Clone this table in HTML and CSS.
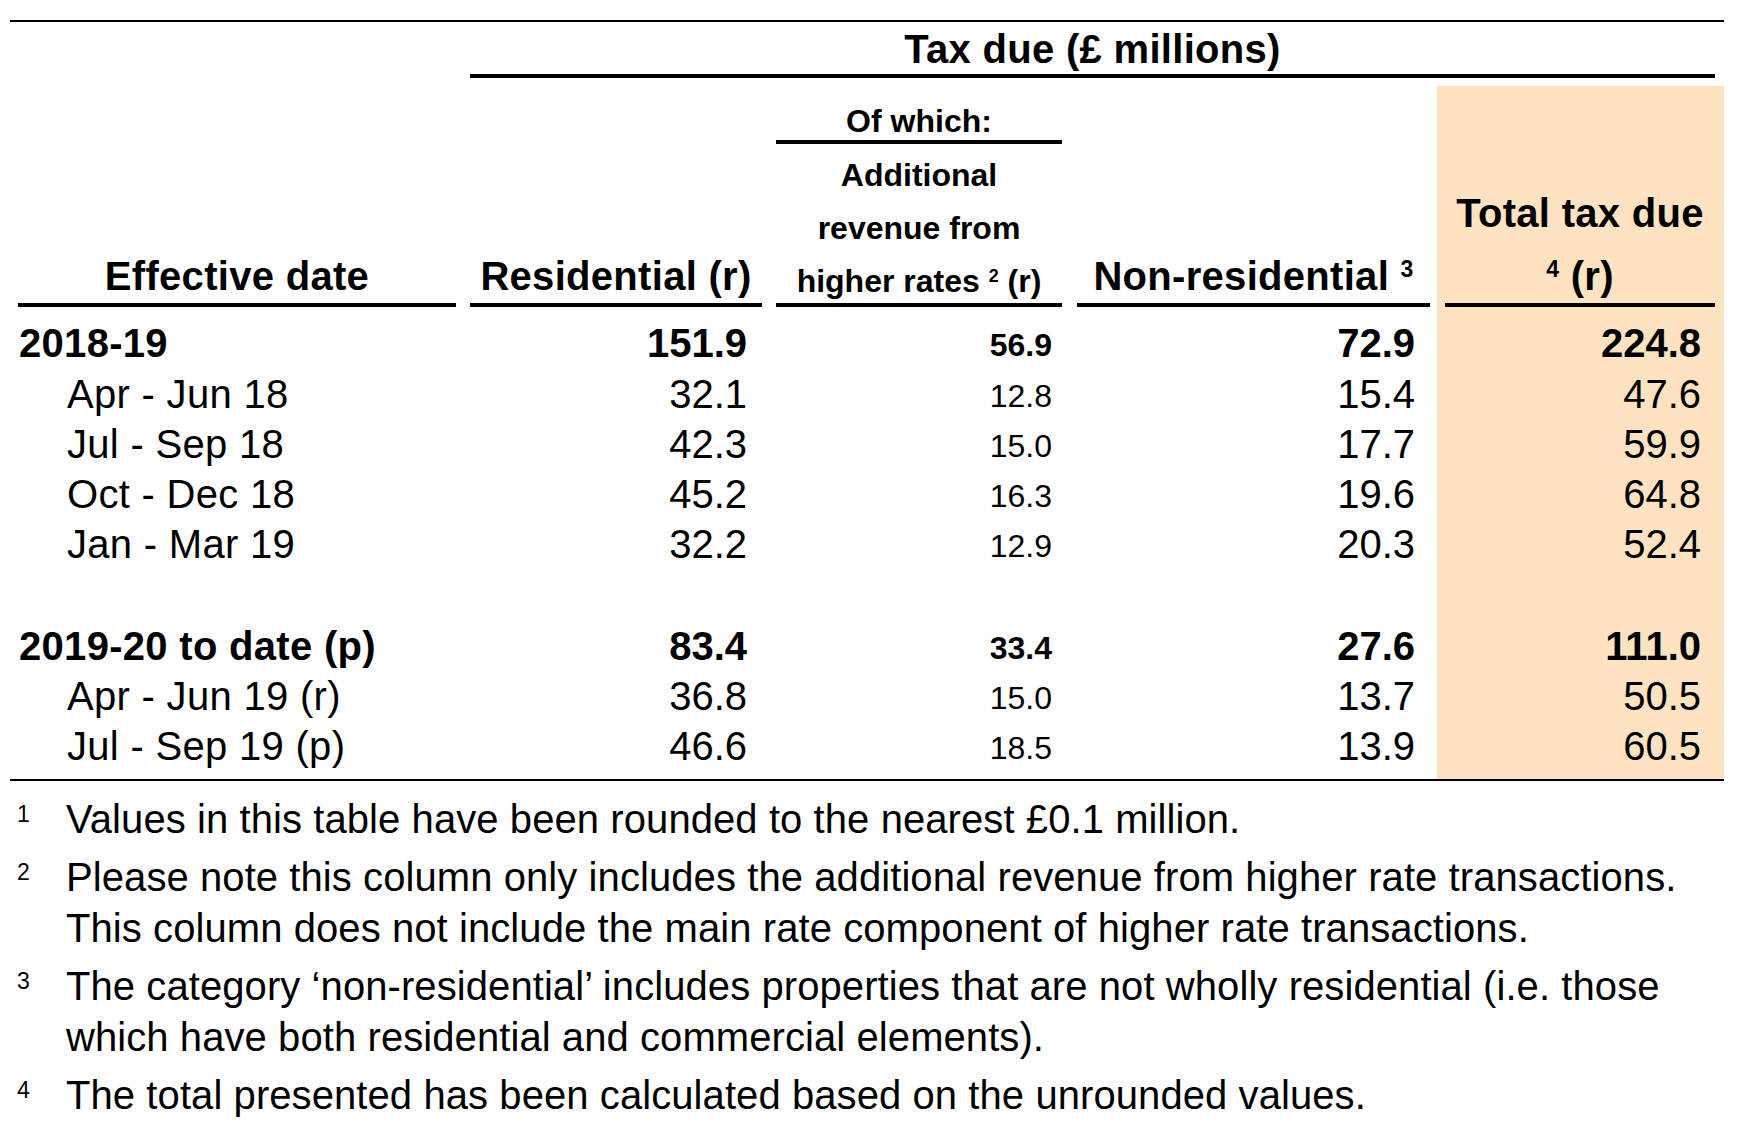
FILE: index.html
```html
<!DOCTYPE html>
<html lang="en">
<head>
<meta charset="utf-8">
<title>Tax due (£ millions)</title>
<link rel="stylesheet" href="styles.css">
</head>
<body>
<div class="page">
  <div class="tbl">
    <div class="cell blank"></div>
    <div class="cell title"><div class="title-in">Tax due (£ millions)</div></div>

    <div class="cell head c1"><div class="hu m1"><div class="hline">Effective date</div></div></div>
    <div class="cell head c2"><div class="hu m2"><div class="hline">Residential (r)</div></div></div>
    <div class="cell head c3">
      <div class="ofwhich m3">Of which:</div>
      <div class="hu m3 small-head">
        <div class="sline">Additional</div>
        <div class="sline">revenue from</div>
        <div class="sline">higher rates <span class="sup-s">2</span> (r)</div>
      </div>
    </div>
    <div class="cell head c4"><div class="hu m4"><div class="hline">Non-residential <span class="sup-l">3</span></div></div></div>
    <div class="cell head c5 hl"><div class="hu m5"><div class="hline first">Total tax due</div><div class="hline"><span class="sup-l">4</span> (r)</div></div></div>

    <div class="cell lab bold r1">2018-19</div>
    <div class="cell num bold r1">151.9</div>
    <div class="cell snum bold r1">56.9</div>
    <div class="cell num bold r1">72.9</div>
    <div class="cell tnum bold hl r1">224.8</div>

    <div class="cell lab sub">Apr - Jun 18</div>
    <div class="cell num">32.1</div>
    <div class="cell snum">12.8</div>
    <div class="cell num">15.4</div>
    <div class="cell tnum hl">47.6</div>

    <div class="cell lab sub">Jul - Sep 18</div>
    <div class="cell num">42.3</div>
    <div class="cell snum">15.0</div>
    <div class="cell num">17.7</div>
    <div class="cell tnum hl">59.9</div>

    <div class="cell lab sub">Oct - Dec 18</div>
    <div class="cell num">45.2</div>
    <div class="cell snum">16.3</div>
    <div class="cell num">19.6</div>
    <div class="cell tnum hl">64.8</div>

    <div class="cell lab sub">Jan - Mar 19</div>
    <div class="cell num">32.2</div>
    <div class="cell snum">12.9</div>
    <div class="cell num">20.3</div>
    <div class="cell tnum hl">52.4</div>

    <div class="cell gap"></div>
    <div class="cell gap"></div>
    <div class="cell gap"></div>
    <div class="cell gap"></div>
    <div class="cell gap hl"></div>

    <div class="cell lab bold">2019-20 to date (p)</div>
    <div class="cell num bold">83.4</div>
    <div class="cell snum bold">33.4</div>
    <div class="cell num bold">27.6</div>
    <div class="cell tnum bold hl">111.0</div>

    <div class="cell lab sub">Apr - Jun 19 (r)</div>
    <div class="cell num">36.8</div>
    <div class="cell snum">15.0</div>
    <div class="cell num">13.7</div>
    <div class="cell tnum hl">50.5</div>

    <div class="cell lab sub last">Jul - Sep 19 (p)</div>
    <div class="cell num last">46.6</div>
    <div class="cell snum last">18.5</div>
    <div class="cell num last">13.9</div>
    <div class="cell tnum hl last">60.5</div>
  </div>

  <div class="notes">
    <div class="fn"><div class="fn-num"><span class="fn-sup">1</span></div><div class="fn-text">Values in this table have been rounded to the nearest £0.1 million.</div></div>
    <div class="fn"><div class="fn-num"><span class="fn-sup">2</span></div><div class="fn-text">Please note this column only includes the additional revenue from higher rate transactions.<br>This column does not include the main rate component of higher rate transactions.</div></div>
    <div class="fn"><div class="fn-num"><span class="fn-sup">3</span></div><div class="fn-text">The category ‘non-residential’ includes properties that are not wholly residential (i.e. those<br>which have both residential and commercial elements).</div></div>
    <div class="fn"><div class="fn-num"><span class="fn-sup">4</span></div><div class="fn-text">The total presented has been calculated based on the unrounded values.</div></div>
  </div>
</div>
</body>
</html>
```

FILE: styles.css
```css
html, body {
  margin: 0;
  padding: 0;
  background: #ffffff;
}

body {
  font-family: "Liberation Sans", Arial, sans-serif;
  color: #000000;
  font-size: 40px;
}

.page {
  padding: 20px 23px 0 10px;
}

.tbl {
  display: grid;
  grid-template-columns: 453px 306px 300px 368px 287px;
  border-top: 2px solid #000;
  border-bottom: 2px solid #000;
}

.hl {
  background: #fde3c1;
}

/* Title row */
.title {
  grid-column: 2 / 6;
}

.title-in {
  margin: 0 9px 8px 7px;
  padding-top: 2px;
  line-height: 50px;
  border-bottom: 4px solid #000;
  text-align: center;
  font-weight: bold;
  letter-spacing: 0.3px;
}

/* Column headers */
.head {
  display: flex;
  flex-direction: column;
  justify-content: flex-end;
  padding-bottom: 11px;
  font-weight: bold;
}

.hu {
  border-bottom: 4px solid #000;
  text-align: center;
}

.m1 { margin: 0 7px 0 8px; }
.m2 { margin: 0 7px 0 7px; }
.m3 { margin: 0 7px 0 7px; }
.m4 { margin: 0 7px 0 8px; }
.m5 { margin: 0 9px 0 8px; }

.hline {
  line-height: 54px;
  white-space: nowrap;
  letter-spacing: 0.3px;
}

.hline.first {
  margin-bottom: 9px;
}

.c3 {
  padding-top: 16px;
  font-size: 32px;
}

.ofwhich {
  line-height: 38px;
  border-bottom: 4px solid #000;
  text-align: center;
  margin-bottom: 9px;
}

.small-head {
  display: flex;
  flex-direction: column;
  gap: 9px;
}

.sline {
  line-height: 44px;
  white-space: nowrap;
}

.sup-s {
  font-size: 18px;
  line-height: 0;
  vertical-align: 10px;
}

.sup-l {
  font-size: 23px;
  line-height: 0;
  vertical-align: 13px;
}

/* Data rows */
.lab, .num, .tnum, .snum, .gap {
  height: 50px;
  line-height: 50px;
  white-space: nowrap;
}

.lab {
  letter-spacing: 0.3px;
}

.lab.bold {
  padding-left: 9px;
}

.lab.sub {
  padding-left: 57px;
}

.bold {
  font-weight: bold;
}

.num {
  text-align: right;
  padding-right: 22px;
}

.tnum {
  text-align: right;
  padding-right: 23px;
}

.snum {
  font-size: 32px;
  text-align: right;
  padding-right: 17px;
  padding-top: 5px;
  height: 45px;
  line-height: 45px;
}

.r1 {
  padding-bottom: 1px;
}

.gap {
  height: 52px;
}

.last {
  padding-bottom: 8px;
}

/* Footnotes */
.notes {
  margin-top: 13px;
  display: flex;
  flex-direction: column;
  gap: 7px;
}

.fn {
  display: flex;
  line-height: 51px;
}

.fn-num {
  flex: 0 0 56px;
  box-sizing: border-box;
  padding-left: 7px;
}

.fn-sup {
  font-size: 23px;
  line-height: 0;
  vertical-align: 11px;
}

.fn-text {
  white-space: nowrap;
  letter-spacing: 0.08px;
}
```
